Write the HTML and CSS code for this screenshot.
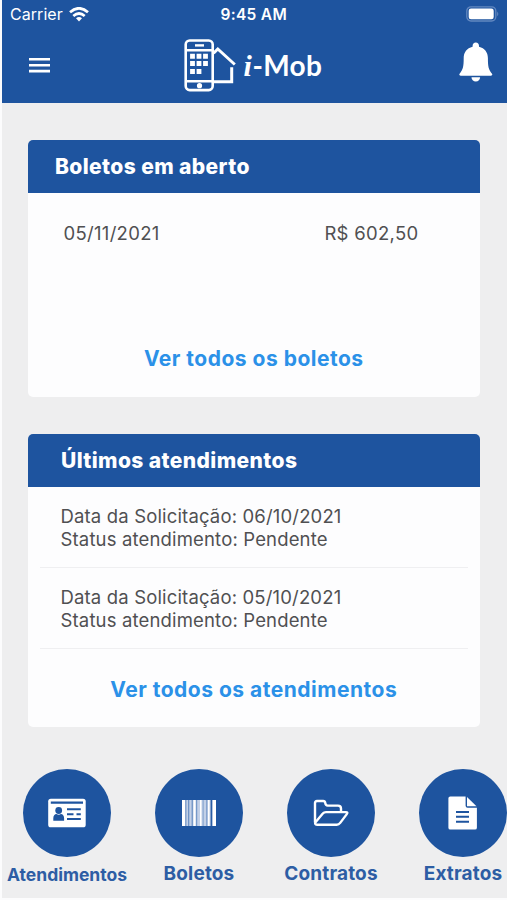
FILE: index.html
```html
<!DOCTYPE html>
<html lang="pt-BR">
<head>
<meta charset="utf-8">
<title>i-Mob</title>
<link rel="stylesheet" href="styles.css">
</head>
<body>
<div class="screen">
  <header class="header">
    <div class="status">
      <div class="carrier">
        <span class="carrier-name">Carrier</span>
        <svg class="wifi" width="20" height="15" viewBox="0 0 20 15" fill="none" stroke="#fff" stroke-width="2.7"><path d="M1 5.2Q10-2.6 19 5.2M4.3 9Q10 4 15.7 9"/><path d="M7 11.2Q10 8.8 13 11.2L10 14.5Z" fill="#fff" stroke="none"/></svg>
      </div>
      <span class="clock">9:45 AM</span>
      <svg class="battery" width="33" height="16" viewBox="0 0 33 16"><rect x=".8" y=".8" width="29" height="14.2" rx="4.2" fill="none" stroke="#6288c0" stroke-width="1.3"/><rect x="2.7" y="2.5" width="25" height="10.8" rx="2.3" fill="#fff"/><path d="M31.2 5.5Q33.4 7.9 31.2 10.3Z" fill="#6288c0"/></svg>
    </div>
    <div class="toolbar">
      <svg class="menu" width="21" height="15" viewBox="0 0 21 15" fill="#fff"><path d="M0 0h21v2.6H0zM0 5.9h21v2.6H0zM0 11.8h21v2.6H0z"/></svg>
      <div class="logo">
        <svg width="52" height="53" viewBox="0 0 52 53" fill="none" stroke="#fff" stroke-width="2.6"><rect x="1.7" y="1.5" width="27" height="49.6" rx="4"/><path d="M2 11.2h27M2 42.3h27"/><path d="M29.500 14.300l4.300-4.300L50.800 25.500M47.700 28.200v14.500H29" stroke-width="3"/><path d="M11 6.4h9" stroke-width="2.4"/><circle cx="15.500" cy="46.700" r="2.600" fill="#fff" stroke="none"/><path d="M6.100 17.200h4.800m1.700 0h4.800m1.700 0h4.800M6.100 24.600h4.800m1.700 0h4.800m1.700 0h4.800M6.100 32.400h4.800m1.700 0h4.800" stroke-width="5"/></svg>
        <span class="brand"><span class="brand-i">i</span><span class="brand-mob">-Mob</span></span>
      </div>
      <svg class="bell" width="34" height="40" viewBox="0 0 34 40" fill="#fff"><path d="M16.800.5c2 0 3.200 1.400 3.200 3.400v.9c5.800 1.500 8.900 5.700 8.900 11.200 0 8.500.6 11.500 3.900 15.400.9.900.5 2.300-.9 2.300H1.700c-1.400 0-1.800-1.400-.9-2.300 3.300-3.900 3.900-6.900 3.900-15.400 0-5.500 3.100-9.700 8.900-11.200v-.9c0-2 1.200-3.400 3.200-3.400z"/><path d="M12.500 35.200h8.600c0 2.500-1.800 4.300-4.300 4.300s-4.300-1.800-4.300-4.300z"/></svg>
    </div>
  </header>

  <main class="content">
    <section class="card invoices">
      <h2 class="card-title">Boletos em aberto</h2>
      <div class="invoice"><span>05/11/2021</span><span>R$ 602,50</span></div>
      <a class="more">Ver todos os boletos</a>
    </section>
    <section class="card requests">
      <h2 class="card-title">Últimos atendimentos</h2>
      <div class="request"><p>Data da Solicitação: 06/10/2021</p><p>Status atendimento: Pendente</p></div>
      <div class="request"><p>Data da Solicitação: 05/10/2021</p><p>Status atendimento: Pendente</p></div>
      <a class="more">Ver todos os atendimentos</a>
    </section>
  </main>

  <nav class="nav">
    <a class="nav-item">
      <span class="disc"><svg width="38" height="30" viewBox="0 0 38 30"><rect x=".2" y=".7" width="37.500" height="28.600" rx="2.600" fill="#fff"/><g fill="#1e549f"><path d="M2.800 3.600h32.200v2.200H2.800z"/><circle cx="10.700" cy="12.500" r="3.400"/><path d="M5.300 22.800v-2.500c0-2.600 1.300-4 3.200-4.200 1.300.9 3.100.9 4.400 0 1.900.2 3.200 1.600 3.200 4.200v2.500z"/><path d="M19 10.200h13.800v2H19zM19 15.200h6.500v2H19zM28.500 15.200h4.300v2h-4.300zM19 20h13.800v2H19z"/></g></svg></span>
      <span class="label label-small">Atendimentos</span>
    </a>
    <a class="nav-item">
      <span class="disc"><svg width="34" height="28" viewBox="0 0 34 28"><path fill="#c2d0e7" d="M0 1h34v26H0z"/><path fill="#fff" d="M0 1h3v26H0zM11.500 1h2v26h-2zM18 1h1.500v26H18zM26 1h1.500v26H26zM31 1h3v26h-3z"/><path fill="#6f93c5" d="M3.300 1h1.100v26H3.300zM6 1h1.300v26H6zM9.600 1h1.300v26H9.600zM14.100 1h1.100v26h-1.100zM20.700 1h.8v26h-.8zM24.300 1h1v26h-1z"/><path fill="#285ca4" d="M28.600 1h1.500v26h-1.500z"/></svg></span>
      <span class="label">Boletos</span>
    </a>
    <a class="nav-item">
      <span class="disc"><svg width="36" height="28" viewBox="0 0 36 28" fill="none" stroke="#fff" stroke-width="2.400" stroke-linejoin="round"><path d="M2 23.500V4Q2 2 4 2h6.200q1.800 0 2.100 2.200.3 2.400 2.400 2.400H25q3 0 3 3v3.500"/><path d="M2.300 23.500l7.500-8.900q1.200-1.500 3.200-1.500h19.800q2.500 0 1 2l-6.600 8.800q-1.400 1.800-3.500 1.800H4.500Q1.500 25.700 2.300 23.500z"/></svg></span>
      <span class="label">Contratos</span>
    </a>
    <a class="nav-item">
      <span class="disc"><svg width="30" height="34" viewBox="0 0 30 34" fill="#fff"><path d="M2.300.4h15.300v9.300q0 2 2 2h9.300v20q0 1.900-1.900 1.900H2.300q-1.900 0-1.900-1.900V2.300Q.4.400 2.300.4z"/><path d="M19 1l9.500 9.300H19z"/><path d="M8 14.900h13v2H8zm0 4.900h13v2H8zm0 4.900h13v2H8z" fill="#1e549f"/></svg></span>
      <span class="label">Extratos</span>
    </a>
  </nav>
</div>
</body>
</html>
```

FILE: styles.css
```css
* { box-sizing: border-box; }
body { margin: 0; background: #fcfcfd; font-family: Inter, sans-serif; }
.screen { width: 505px; height: 898px; margin-left: 1.5px; background: #eeeeef; overflow: hidden; }
.header { height: 102.500px; background: #1e549f; color: #fff; }
.status { height: 29px; display: grid; grid-template-columns: 1fr auto 1fr; align-items: center; padding: 0 8px 0 8.500px; }
.carrier { display: flex; align-items: center; gap: 6px; font-size: 16px; }
.carrier-name { letter-spacing: .05px; margin-top: -1px; }
.clock { font-size: 15.500px; font-weight: 600; letter-spacing: .3px; margin-left: -1px; }
.battery { justify-self: end; margin-top: -2px; }
.wifi { margin-top: -1px; }
.toolbar { height: 73px; display: flex; align-items: flex-start; padding-left: 27px; }
.menu { margin-top: 29px; }
.logo { display: flex; margin: 9.500px 0 0 134px; width: 140px; gap: 8px; }
.logo svg { flex: none; }
.brand { display: flex; align-items: baseline; height: 40px; line-height: 40px; margin-top: 6px; }
.brand-i { font: italic bold 30px/40px "Liberation Serif", serif; width: 9px; }
.brand-mob { font: bold 28px/40px Lato, sans-serif; letter-spacing: .3px; }
.bell { margin: 13px 0 0 135.500px; }
.content { padding: 37px 27px 0 26.500px; display: grid; gap: 37px; }
.card { background: #fdfdfe; border-radius: 5px; overflow: hidden; }
.invoices { height: 257px; }
.requests { height: 293.500px; }
.card-title { height: 53.500px; margin: 0; padding-left: 27px; display: flex; align-items: center; background: #1e549f; color: #fff; font-size: 21px; font-weight: 800; letter-spacing: .4px; }
.requests .card-title { padding-left: 33px; }
.invoice { height: 80px; display: flex; justify-content: space-between; align-items: center; padding: 0 61px 0 35.500px; font-size: 18.500px; letter-spacing: .3px; color: #505052; }
.more { display: flex; justify-content: center; font-size: 21px; font-weight: 700; letter-spacing: .5px; line-height: 26px; color: #2b91e8; }
.invoices .more { margin-top: 73px; }
.requests .more { margin-top: 28px; }
.request { height: 81px; margin: 0 12px; padding: 17.500px 0 0 20.500px; border-bottom: 1.500px solid #efeff1; color: #505052; font-size: 18.500px; letter-spacing: .16px; line-height: 23px; }
.request p { margin: 0; }
.nav { display: flex; gap: 44px; margin: 42px 0 0 21.500px; }
.nav-item { width: 88px; flex: none; display: flex; flex-direction: column; align-items: center; }
.disc { width: 88px; height: 88px; border-radius: 50%; background: #1e549f; display: flex; align-items: center; justify-content: center; }
.label { font-size: 19px; line-height: 24px; margin-top: 5px; font-weight: 700; letter-spacing: .15px; color: #2d5da4; white-space: nowrap; }
.label-small { font-size: 17.500px; letter-spacing: 0; margin-top: 6px; }
```
